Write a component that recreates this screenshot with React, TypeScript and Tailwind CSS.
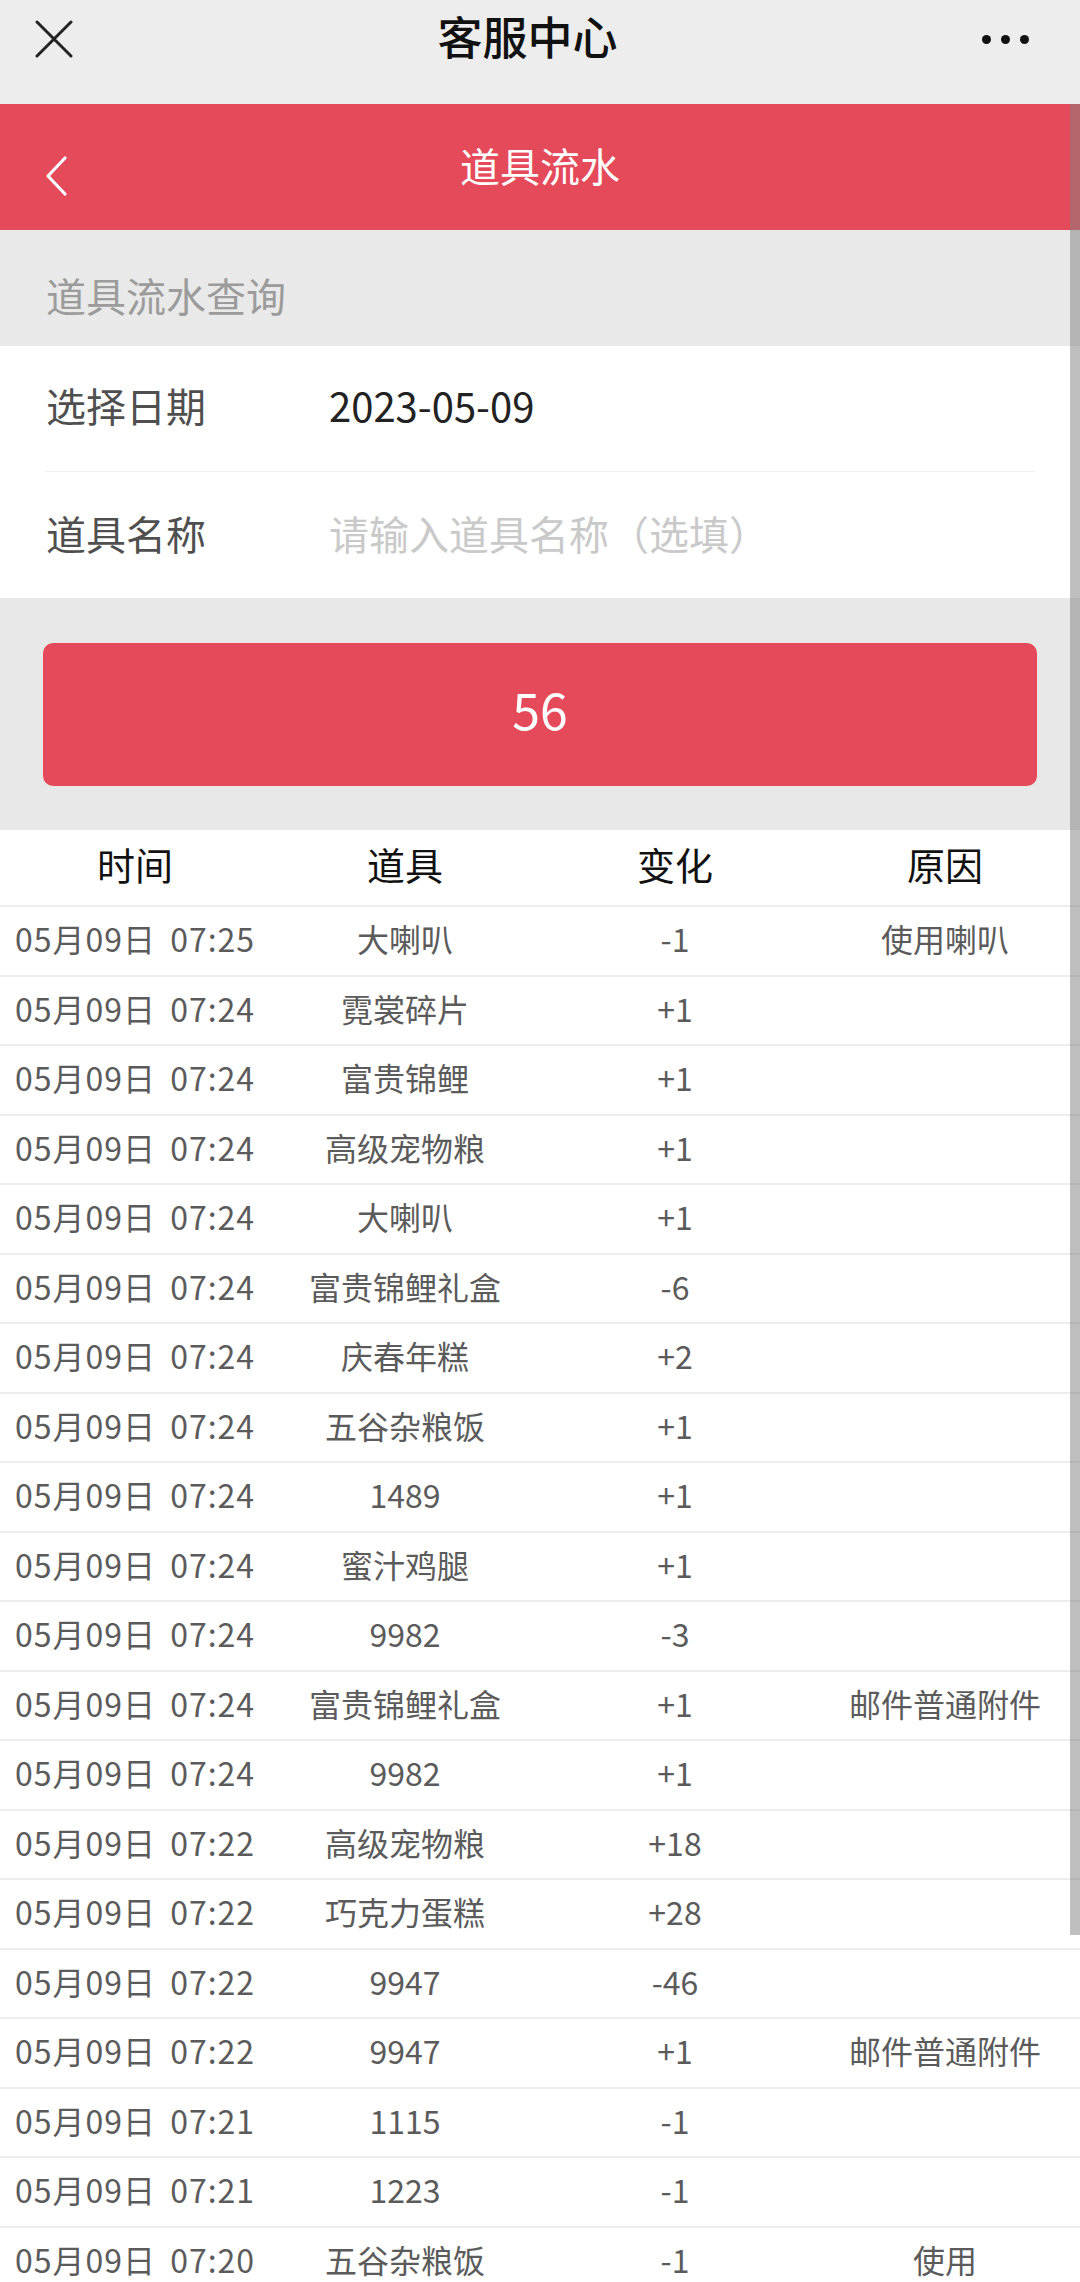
import React from 'react';

type Row = { time: string; item: string; delta: string; reason?: string };

const ROWS: Row[] = [
  { time: '05月09日 07:25', item: '大喇叭', delta: '-1', reason: '使用喇叭' },
  { time: '05月09日 07:24', item: '霓裳碎片', delta: '+1' },
  { time: '05月09日 07:24', item: '富贵锦鲤', delta: '+1' },
  { time: '05月09日 07:24', item: '高级宠物粮', delta: '+1' },
  { time: '05月09日 07:24', item: '大喇叭', delta: '+1' },
  { time: '05月09日 07:24', item: '富贵锦鲤礼盒', delta: '-6' },
  { time: '05月09日 07:24', item: '庆春年糕', delta: '+2' },
  { time: '05月09日 07:24', item: '五谷杂粮饭', delta: '+1' },
  { time: '05月09日 07:24', item: '1489', delta: '+1' },
  { time: '05月09日 07:24', item: '蜜汁鸡腿', delta: '+1' },
  { time: '05月09日 07:24', item: '9982', delta: '-3' },
  { time: '05月09日 07:24', item: '富贵锦鲤礼盒', delta: '+1', reason: '邮件普通附件' },
  { time: '05月09日 07:24', item: '9982', delta: '+1' },
  { time: '05月09日 07:22', item: '高级宠物粮', delta: '+18' },
  { time: '05月09日 07:22', item: '巧克力蛋糕', delta: '+28' },
  { time: '05月09日 07:22', item: '9947', delta: '-46' },
  { time: '05月09日 07:22', item: '9947', delta: '+1', reason: '邮件普通附件' },
  { time: '05月09日 07:21', item: '1115', delta: '-1' },
  { time: '05月09日 07:21', item: '1223', delta: '-1' },
  { time: '05月09日 07:20', item: '五谷杂粮饭', delta: '-1', reason: '使用' },
];

const FONT = { fontFamily: '"Noto Sans CJK SC", "Noto Sans", sans-serif' };

function TopBar() {
  return (
    <div className="h-[104px] bg-[#ededed]">
      <div className="h-[76px] flex items-center justify-between px-[35px]">
        <svg width="38" height="38" viewBox="0 0 38 38" className="mt-[2px]">
          <path d="M2 2 L36 36 M36 2 L2 36" stroke="#222" strokeWidth="3" strokeLinecap="round" />
        </svg>
        <span className="text-[45px] font-medium text-[#111] leading-none -mt-[5px]">客服中心</span>
        <div className="flex gap-[10px] mr-[16px] mt-[2px]">
          <span className="w-[9px] h-[9px] rounded-full bg-[#111]" />
          <span className="w-[9px] h-[9px] rounded-full bg-[#111]" />
          <span className="w-[9px] h-[9px] rounded-full bg-[#111]" />
        </div>
      </div>
    </div>
  );
}

function RedHeader() {
  return (
    <div className="relative h-[126px] bg-[#e54a5b] flex items-center justify-center">
      <svg width="26" height="42" viewBox="0 0 26 42" className="absolute left-[43px] top-[51px]">
        <path d="M22 3 L5 21 L22 39" fill="none" stroke="#fff" strokeWidth="3.2" strokeLinecap="round" strokeLinejoin="round" />
      </svg>
      <span className="text-[40px] text-white leading-none -mt-[4px]">道具流水</span>
    </div>
  );
}

function QueryForm() {
  return (
    <>
      <div className="h-[116px] bg-[#e9e9e9] pt-[45px] pl-[46px]">
        <div className="text-[40px] leading-[40px] text-[#9b9b9b]">道具流水查询</div>
      </div>
      <div className="bg-white">
        <div className="h-[126px] mx-[45px] pb-[7px] flex items-center border-b border-[#efefef]">
          <span className="w-[284px] pl-px text-[40px] text-[#4f4f4f]">选择日期</span>
          <span className="text-[40px] text-[#222]">2023-05-09</span>
        </div>
        <div className="h-[126px] mx-[45px] pb-[5px] flex items-center">
          <span className="w-[284px] pl-px text-[40px] text-[#4f4f4f]">道具名称</span>
          <span className="text-[40px] text-[#c9c9c9]">请输入道具名称（选填）</span>
        </div>
      </div>
      <div className="h-[232px] bg-[#e8e8e8] px-[43px] pt-[45px]">
        <button className="w-full h-[143px] pb-[14px] rounded-[10px] bg-[#e54a5b] text-white text-[50px] leading-none">
          56
        </button>
      </div>
    </>
  );
}

function FlowTable() {
  return (
    <div className="bg-white">
      <div className="h-[77px] pb-[8px] grid grid-cols-4 items-center border-b-2 border-[#ececec] text-[38px] text-[#111] text-center">
        <span>时间</span>
        <span>道具</span>
        <span>变化</span>
        <span>原因</span>
      </div>
      {ROWS.map((r, i) => (
        <div
          key={i}
          className="h-[69.5px] pb-[5px] grid grid-cols-4 items-center border-b-2 border-[#ededed] text-[32px] text-[#5b5b5b] text-center"
        >
          <span className="tracking-[1px] [word-spacing:6px] whitespace-pre">{r.time}</span>
          <span>{r.item}</span>
          <span>{r.delta}</span>
          <span>{r.reason ?? ''}</span>
        </div>
      ))}
    </div>
  );
}

export default function App() {
  return (
    <div className="relative w-[1080px] h-[2282px] overflow-hidden bg-white" style={FONT}>
      <TopBar />
      <RedHeader />
      <QueryForm />
      <FlowTable />
      {/* scroll indicator */}
      <div className="absolute right-0 top-[104px] w-[10px] h-[1831px] bg-[rgba(128,128,128,0.5)]" />
    </div>
  );
}
